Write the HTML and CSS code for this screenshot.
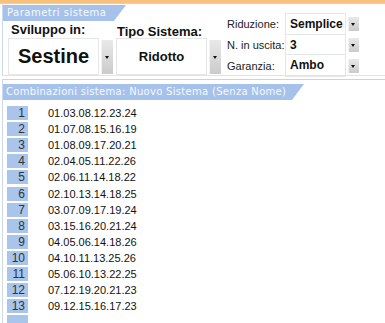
FILE: index.html
```html
<!DOCTYPE html>
<html lang="it">
<head>
    <meta charset="UTF-8">
    <title>Sistema</title>
    <link rel="stylesheet" href="styles.css">
</head>
<body>
    <div class="topline"></div>
    <div class="panel params">
        <div class="left">
            <div class="tab">Parametri sistema</div>
            <div class="groups">
                <div class="group">
                    <div class="group-label">Sviluppo in:</div>
                    <div class="combo">
                        <div class="combo-value big">Sestine</div>
                        <div class="combo-btn"></div>
                    </div>
                </div>
                <div class="group group-two">
                    <div class="group-label lower">Tipo Sistema:</div>
                    <div class="combo">
                        <div class="combo-value">Ridotto</div>
                        <div class="combo-btn"></div>
                    </div>
                </div>
            </div>
        </div>
        <div class="right">
            <div class="opt-row">
                <span class="opt-label">Riduzione:</span>
                <div class="opt-field">Semplice</div>
                <div class="combo-btn small"></div>
            </div>
            <div class="opt-row">
                <span class="opt-label">N. in uscita:</span>
                <div class="opt-field">3</div>
                <div class="combo-btn small"></div>
            </div>
            <div class="opt-row last">
                <span class="opt-label">Garanzia:</span>
                <div class="opt-field">Ambo</div>
                <div class="combo-btn small"></div>
            </div>
        </div>
    </div>

    <div class="panel combos">
        <div class="tab tab-wide">Combinazioni sistema: Nuovo Sistema (Senza Nome)</div>
        <div class="list">
            <div class="row"><span class="num">1</span><span class="comb">01.03.08.12.23.24</span></div>
            <div class="row"><span class="num">2</span><span class="comb">01.07.08.15.16.19</span></div>
            <div class="row"><span class="num">3</span><span class="comb">01.08.09.17.20.21</span></div>
            <div class="row"><span class="num">4</span><span class="comb">02.04.05.11.22.26</span></div>
            <div class="row"><span class="num">5</span><span class="comb">02.06.11.14.18.22</span></div>
            <div class="row"><span class="num">6</span><span class="comb">02.10.13.14.18.25</span></div>
            <div class="row"><span class="num">7</span><span class="comb">03.07.09.17.19.24</span></div>
            <div class="row"><span class="num">8</span><span class="comb">03.15.16.20.21.24</span></div>
            <div class="row"><span class="num">9</span><span class="comb">04.05.06.14.18.26</span></div>
            <div class="row"><span class="num">10</span><span class="comb">04.10.11.13.25.26</span></div>
            <div class="row"><span class="num">11</span><span class="comb">05.06.10.13.22.25</span></div>
            <div class="row"><span class="num">12</span><span class="comb">07.12.19.20.21.23</span></div>
            <div class="row"><span class="num">13</span><span class="comb">09.12.15.16.17.23</span></div>
            <div class="row"><span class="num"></span><span class="comb"></span></div>
        </div>
    </div>
</body>
</html>
```

FILE: styles.css
```css
body {
    margin: 0;
    background-color: white;
    font-family: "Liberation Sans", Arial, sans-serif;
    color: #111;
    overflow: hidden;
}
.topline {
    height: 3px;
    background-color: #f8c27e;
    border-bottom: 1px solid #c3d4ee;
}
.panel {
    margin-left: 2px;
    border-left: 1px solid #cddaee;
}
.params {
    display: flex;
    height: 71px;
    border-bottom: 1px solid #e3e3e3;
}
.left {
    width: 220px;
}
.tab {
    margin-top: 1px;
    width: 119px;
    height: 16px;
    padding-left: 4px;
    line-height: 16px;
    background-color: #a6c2ea;
    color: #f7f9fd;
    font-family: "DejaVu Sans", Verdana, sans-serif;
    font-size: 10px;
    letter-spacing: 0.5px;
    white-space: nowrap;
    clip-path: polygon(0 0, 100% 0, calc(100% - 12px) 100%, 0 100%);
}
.groups {
    display: flex;
}
.group {
    margin-left: 5px;
}
.group-two {
    margin-left: 3px;
}
.group-label {
    height: 17px;
    line-height: 17px;
    padding-left: 3px;
    font-size: 13px;
    font-weight: bold;
}
.group-label.lower {
    padding-top: 2px;
    height: 15px;
    padding-left: 1px;
}
.combo {
    display: flex;
    height: 37px;
}
.combo-value {
    width: 89px;
    border: 1px solid #e6e6e6;
    display: flex;
    align-items: center;
    justify-content: center;
    font-size: 13px;
    font-weight: bold;
}
.combo-value.big {
    font-size: 20px;
}
.combo-btn {
    position: relative;
    width: 11px;
    margin: 2px 0 1px 2px;
    background: linear-gradient(to bottom, #e9e9e9, #cbcbcb);
    border-left: 1px solid #f2f2f2;
}
.combo-btn::after {
    content: "";
    position: absolute;
    left: 3px;
    top: 50%;
    margin-top: -1px;
    border-left: 2.5px solid transparent;
    border-right: 2.5px solid transparent;
    border-top: 3px solid #111;
}
.combo-btn.small {
    width: 10px;
    height: 14px;
    margin: 0 0 0 2px;
}
.combo-btn.small::after {
    left: 2px;
}
.right {
    padding-top: 9px;
    padding-left: 4px;
}
.opt-row {
    display: flex;
    align-items: center;
    height: 21px;
}
.opt-label {
    width: 58px;
    font-size: 11px;
    color: #222;
}
.opt-field {
    width: 55px;
    height: 21px;
    line-height: 21px;
    padding-left: 4px;
    border: 1px solid #e6e6e6;
    border-bottom: none;
    font-size: 12px;
    font-weight: bold;
}
.opt-row.last .opt-field {
    border-bottom: 1px solid #e6e6e6;
}
.combos {
    margin-top: 3px;
    border-top: 1px solid #c3d4ee;
}
.tab-wide {
    margin-top: 4px;
    width: 298px;
    padding-left: 3px;
    letter-spacing: 0.3px;
}
.list {
    padding-top: 5px;
}
.row {
    display: flex;
    height: 16.1px;
    align-items: center;
}
.num {
    width: 18px;
    height: 14px;
    line-height: 14px;
    margin-left: 4px;
    padding-right: 3px;
    background-color: #a9c5ec;
    text-align: right;
    font-size: 12px;
    color: #333;
}
.comb {
    margin-left: 20px;
    font-size: 11px;
    color: #111;
}
```
